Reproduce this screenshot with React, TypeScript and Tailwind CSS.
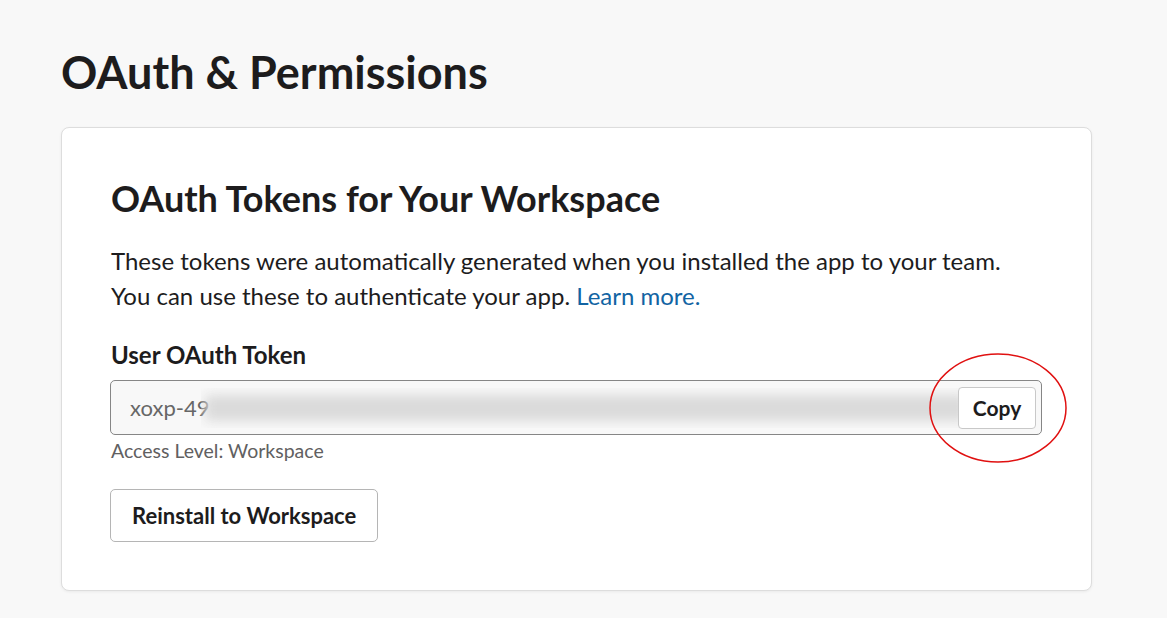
import React from "react";

export default function App() {
  return (
    <div
      className="w-[1167px] h-[618px] bg-[#f8f8f8] overflow-hidden relative"
      style={{ fontFamily: "Lato, 'Noto Sans', sans-serif" }}
    >
      <div className="pl-[61px] pr-[75px] pt-[44px]">
        <h1 className="text-[45px] leading-[56px] font-bold text-[#1d1c1d]">
          OAuth &amp; Permissions
        </h1>
        <div className="mt-[27px] bg-white border border-[#dddddd] rounded-[8px] shadow-[0_1px_3px_rgba(0,0,0,0.06)] h-[464px] pl-[48px] pr-[49px] pt-[48px]">
          <h2 className="ml-[1px] text-[36px] leading-[44px] font-bold text-[#1d1c1d]">
            OAuth Tokens for Your Workspace
          </h2>
          <p className="ml-[1px] mt-[23px] text-[24px] leading-[35px] text-[#1d1c1d]">
            These tokens were automatically generated when you installed the app to your team.
            <br />
            You can use these to authenticate your app.{" "}
            <span className="text-[#1264a3]">Learn more.</span>
          </p>
          <div className="ml-[1px] mt-[27px] text-[24px] leading-[30px] font-bold text-[#1d1c1d]">
            User OAuth Token
          </div>
          <div className="mt-[10px] h-[55px] border border-[#868686] rounded-[5px] bg-[#f8f8f8] flex items-center pl-[19px] pr-[5px] overflow-hidden">
            <span className="text-[22px] text-[#676767]">xoxp-49</span>
            <div className="flex-1 h-[40px] relative overflow-hidden -ml-[8px] -mr-[10px]">
              <div className="absolute inset-y-[7px] left-[4px] right-[0px] bg-[#dadada] blur-[6px] rounded" />
            </div>
            <button className="relative h-[42px] w-[78px] bg-white border border-[#c8c8c8] rounded-[4px] text-[21px] font-bold text-[#1d1c1d] flex items-center justify-center">
              Copy
            </button>
          </div>
          <div className="ml-[1px] mt-[3px] text-[19.5px] leading-[26px] text-[#616061]">
            Access Level: Workspace
          </div>
          <button className="mt-[25px] h-[53px] px-[21px] bg-white border border-[#b5b5b5] rounded-[5px] text-[22px] font-bold text-[#1d1c1d]">
            Reinstall to Workspace
          </button>
        </div>
      </div>
      <svg className="absolute left-0 top-0" width="1167" height="618">
        <ellipse cx="998" cy="408" rx="68" ry="54" fill="none" stroke="#e01010" strokeWidth="1.5" />
      </svg>
    </div>
  );
}
